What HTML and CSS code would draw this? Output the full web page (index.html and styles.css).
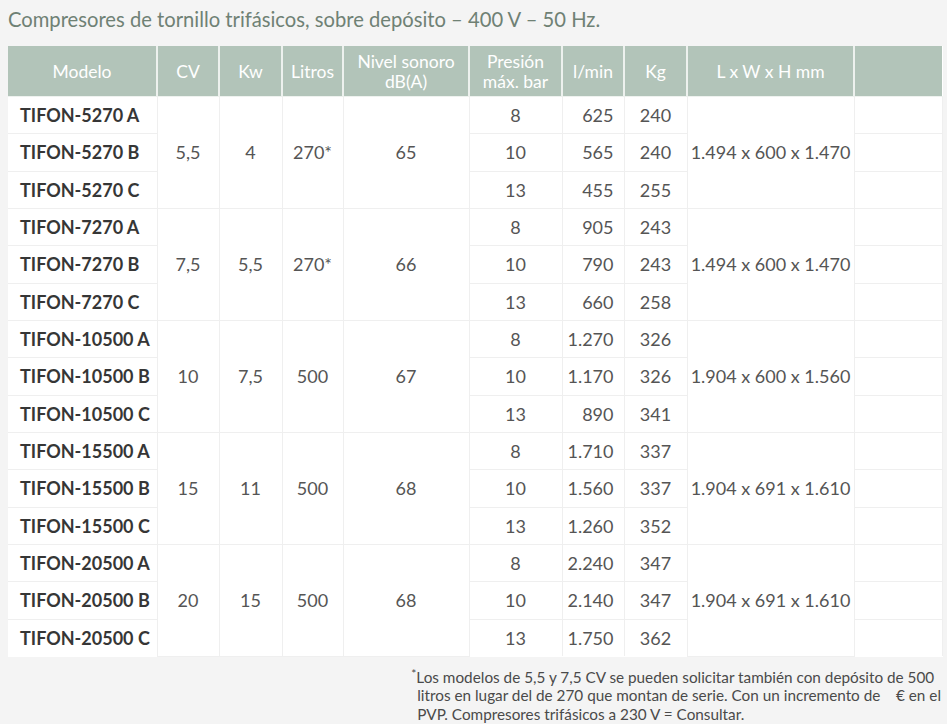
FILE: index.html
```html
<!DOCTYPE html>
<html lang="es">
<head>
<meta charset="utf-8">
<title>Compresores de tornillo trifásicos</title>
<link rel="stylesheet" href="styles.css">
</head>
<body>
<div class="page">
  <h1 class="title">Compresores de tornillo trifásicos, sobre depósito – 400 V – 50 Hz.</h1>
  <table class="specs">
    <colgroup>
      <col class="c-model"><col class="c-cv"><col class="c-kw"><col class="c-lit"><col class="c-db">
      <col class="c-pres"><col class="c-lmin"><col class="c-kg"><col class="c-dim"><col class="c-empty">
    </colgroup>
    <thead>
      <tr>
        <th>Modelo</th><th>CV</th><th>Kw</th><th>Litros</th><th>Nivel sonoro<br>dB(A)</th>
        <th>Presión<br>máx. bar</th><th>l/min</th><th>Kg</th><th>L x W x H mm</th><th></th>
      </tr>
    </thead>
    <tbody>
      <tr><td class="model">TIFON-5270 A</td><td rowspan="3">5,5</td><td rowspan="3">4</td><td rowspan="3">270*</td><td rowspan="3">65</td><td>8</td><td class="num">625</td><td>240</td><td rowspan="3" class="dim">1.494 x 600 x 1.470</td><td></td></tr>
      <tr><td class="model">TIFON-5270 B</td><td>10</td><td class="num">565</td><td>240</td><td></td></tr>
      <tr><td class="model">TIFON-5270 C</td><td>13</td><td class="num">455</td><td>255</td><td></td></tr>

      <tr><td class="model">TIFON-7270 A</td><td rowspan="3">7,5</td><td rowspan="3">5,5</td><td rowspan="3">270*</td><td rowspan="3">66</td><td>8</td><td class="num">905</td><td>243</td><td rowspan="3" class="dim">1.494 x 600 x 1.470</td><td></td></tr>
      <tr><td class="model">TIFON-7270 B</td><td>10</td><td class="num">790</td><td>243</td><td></td></tr>
      <tr><td class="model">TIFON-7270 C</td><td>13</td><td class="num">660</td><td>258</td><td></td></tr>

      <tr><td class="model">TIFON-10500 A</td><td rowspan="3">10</td><td rowspan="3">7,5</td><td rowspan="3">500</td><td rowspan="3">67</td><td>8</td><td class="num">1.270</td><td>326</td><td rowspan="3" class="dim">1.904 x 600 x 1.560</td><td></td></tr>
      <tr><td class="model">TIFON-10500 B</td><td>10</td><td class="num">1.170</td><td>326</td><td></td></tr>
      <tr><td class="model">TIFON-10500 C</td><td>13</td><td class="num">890</td><td>341</td><td></td></tr>

      <tr><td class="model">TIFON-15500 A</td><td rowspan="3">15</td><td rowspan="3">11</td><td rowspan="3">500</td><td rowspan="3">68</td><td>8</td><td class="num">1.710</td><td>337</td><td rowspan="3" class="dim">1.904 x 691 x 1.610</td><td></td></tr>
      <tr><td class="model">TIFON-15500 B</td><td>10</td><td class="num">1.560</td><td>337</td><td></td></tr>
      <tr><td class="model">TIFON-15500 C</td><td>13</td><td class="num">1.260</td><td>352</td><td></td></tr>

      <tr><td class="model">TIFON-20500 A</td><td rowspan="3">20</td><td rowspan="3">15</td><td rowspan="3">500</td><td rowspan="3">68</td><td>8</td><td class="num">2.240</td><td>347</td><td rowspan="3" class="dim">1.904 x 691 x 1.610</td><td></td></tr>
      <tr><td class="model">TIFON-20500 B</td><td>10</td><td class="num">2.140</td><td>347</td><td></td></tr>
      <tr><td class="model">TIFON-20500 C</td><td>13</td><td class="num">1.750</td><td>362</td><td></td></tr>
    </tbody>
  </table>
  <p class="note"><sup>*</sup>Los modelos de 5,5 y 7,5 CV se pueden solicitar también con depósito de 500<br>litros en lugar del de 270 que montan de serie. Con un incremento de &nbsp;&nbsp; € en el<br>PVP. Compresores trifásicos a 230 V = Consultar.</p>
</div>
</body>
</html>
```

FILE: styles.css
```css
html, body {
  margin: 0;
  padding: 0;
  background: #f4f4f4;
}

.page {
  padding: 7px 0 0 8px;
  font-family: Lato, "Open Sans", sans-serif;
}

.title {
  margin: 0 0 15px 0;
  font-size: 20.2px;
  line-height: 24px;
  font-weight: 400;
  color: #6f8174;
}

.specs {
  width: 934px;
  border-collapse: collapse;
  table-layout: fixed;
  background: #ffffff;
  font-size: 18px;
}

.c-model { width: 149px; }
.c-cv { width: 62px; }
.c-kw { width: 63px; }
.c-lit { width: 61px; }
.c-db { width: 126px; }
.c-pres { width: 93px; }
.c-lmin { width: 62px; }
.c-kg { width: 63px; }
.c-dim { width: 167px; }
.c-empty { width: 88px; }

.specs th {
  height: 49px;
  padding: 1px 2px 0;
  background: #b2c4b9;
  color: #ffffff;
  font-weight: 400;
  font-size: 17.5px;
  line-height: 20px;
  text-align: center;
  white-space: nowrap;
  border-left: 2px solid #edf1ee;
  border-bottom: 1px solid #eef2ef;
}

.specs th:first-child {
  border-left: none;
}

.specs td {
  height: 37.33px;
  padding: 0 4px;
  box-sizing: border-box;
  text-align: center;
  vertical-align: middle;
  white-space: nowrap;
  color: #555555;
  font-weight: 400;
  line-height: 22px;
  border: 1px solid #efefef;
}

.specs tbody tr:first-child td {
  border-top: none;
}

.specs td.model {
  text-align: left;
  padding: 0 0 0 12px;
  font-weight: 700;
  color: #363636;
  border-left: none;
}

.specs td.num {
  text-align: right;
  padding-right: 10px;
}

.specs td.dim {
  padding: 0;
}

.specs tbody tr:last-child td {
  border-bottom: none;
}

.note {
  width: max-content;
  margin: 11px 6px 0 auto;
  padding-left: 6px;
  text-indent: -6px;
  white-space: nowrap;
  font-size: 15.3px;
  line-height: 18.5px;
  color: #4a4a4a;
}

.note sup {
  font-size: 12px;
  line-height: 0;
  vertical-align: 5px;
}
```
